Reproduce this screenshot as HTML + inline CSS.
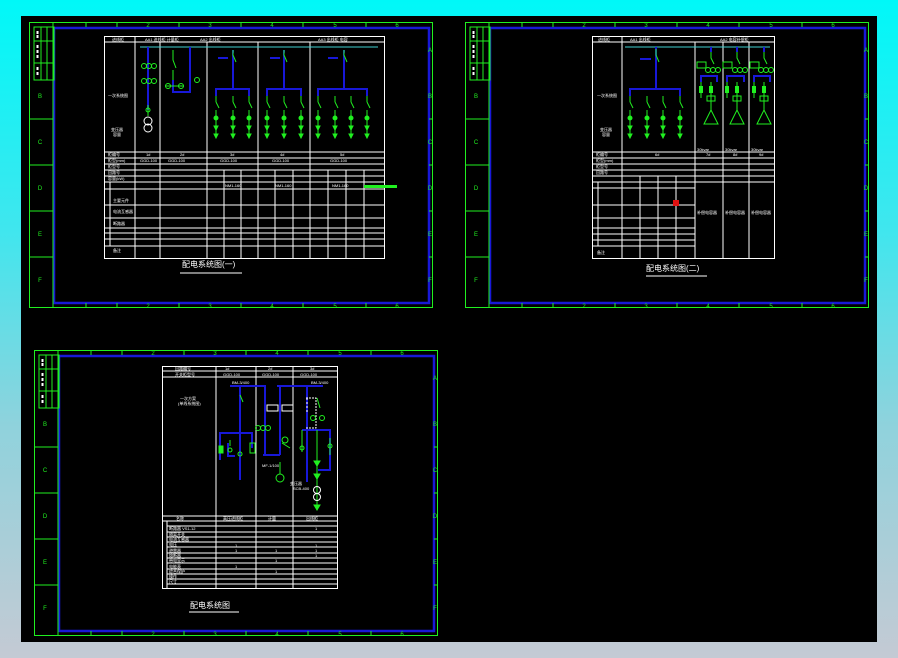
<!DOCTYPE html>
<html><head><meta charset="utf-8"><style>
html,body{margin:0;padding:0}
body{width:898px;height:658px;overflow:hidden;background:linear-gradient(#00f8f8 0%,#40e6ee 35%,#90d2dc 65%,#c4cad4 100%);position:relative;font-family:"Liberation Sans","Noto Sans CJK SC",sans-serif}
#blk{position:absolute;left:21px;top:16px;width:856px;height:626px;background:#000}
svg{position:absolute;left:0;top:0}
</style></head><body>
<div id="blk"></div>
<svg width="898" height="658" viewBox="0 0 898 658" font-family="Liberation Sans, Noto Sans CJK SC, sans-serif">
<defs>
<g id="frame">
<rect x="0.5" y="0.5" width="403" height="285" fill="none" stroke="#20f020" stroke-width="1"/>
<rect x="25" y="6" width="375" height="275" fill="none" stroke="#1818d8" stroke-width="2.5"/>
<line x1="24" y1="0" x2="24" y2="286" stroke="#20f020"/>
<g stroke="#20f020" stroke-width="1">
<line x1="0" y1="97" x2="24" y2="97"/><line x1="0" y1="143" x2="24" y2="143"/><line x1="0" y1="189" x2="24" y2="189"/><line x1="0" y1="235" x2="24" y2="235"/>
<line x1="400" y1="97" x2="404" y2="97"/><line x1="400" y1="143" x2="404" y2="143"/><line x1="400" y1="189" x2="404" y2="189"/><line x1="400" y1="235" x2="404" y2="235"/>
<rect x="5" y="5" width="20" height="53" fill="none"/>
<line x1="12" y1="5" x2="12" y2="58"/><line x1="18" y1="5" x2="18" y2="58"/>
<line x1="5" y1="19" x2="25" y2="19"/><line x1="5" y1="41" x2="25" y2="41"/>
<line x1="57" y1="0" x2="57" y2="5"/><line x1="88" y1="0" x2="88" y2="5"/><line x1="150" y1="0" x2="150" y2="5"/><line x1="212" y1="0" x2="212" y2="5"/><line x1="274" y1="0" x2="274" y2="5"/><line x1="337" y1="0" x2="337" y2="5"/>
<line x1="57" y1="281" x2="57" y2="286"/><line x1="88" y1="281" x2="88" y2="286"/><line x1="150" y1="281" x2="150" y2="286"/><line x1="212" y1="281" x2="212" y2="286"/><line x1="274" y1="281" x2="274" y2="286"/><line x1="337" y1="281" x2="337" y2="286"/>
</g>
<g fill="#fff"><rect x="7.5" y="9" width="2" height="3"/><rect x="7.5" y="13" width="2" height="3"/><rect x="7.5" y="23" width="2" height="3"/><rect x="7.5" y="28" width="2" height="3"/><rect x="7.5" y="33" width="2" height="3"/><rect x="7.5" y="45" width="2" height="3"/><rect x="7.5" y="50" width="2" height="3"/></g>
<g fill="#20f020" font-size="6" text-anchor="middle">
<text x="11" y="76">B</text><text x="11" y="122">C</text><text x="11" y="168">D</text><text x="11" y="214">E</text><text x="11" y="260">F</text>
<text x="401" y="30">A</text><text x="401" y="76">B</text><text x="401" y="122">C</text><text x="401" y="168">D</text><text x="401" y="214">E</text><text x="401" y="260">F</text>
<text x="119" y="5">2</text><text x="181" y="5">3</text><text x="243" y="5">4</text><text x="306" y="5">5</text><text x="368" y="5">6</text>
<text x="119" y="286">2</text><text x="181" y="286">3</text><text x="243" y="286">4</text><text x="306" y="286">5</text><text x="368" y="286">6</text>
</g>
</g>
<g id="br" stroke="#20f020" fill="none" stroke-width="1">
<line x1="0" y1="0" x2="0" y2="6"/><line x1="0" y1="6" x2="3" y2="12"/><line x1="0" y1="14" x2="0" y2="30"/>
<circle cx="0" cy="22" r="2" fill="#20f020"/><path d="M-2 30 L2 30 L0 34 Z" fill="#20f020"/><line x1="0" y1="34" x2="0" y2="40"/><path d="M-2 38 L2 38 L0 42 Z" fill="#20f020"/>
</g>
</defs>

<!-- Sheet 1 -->
<use href="#frame" x="29" y="22"/>
<g stroke="#fff" stroke-width="1" fill="none">
<rect x="104.5" y="36.5" width="280" height="222"/>
<line x1="104" y1="42" x2="384" y2="42"/>
<line x1="104" y1="152" x2="384" y2="152"/><line x1="104" y1="158" x2="384" y2="158"/><line x1="104" y1="164" x2="384" y2="164"/><line x1="104" y1="170" x2="384" y2="170"/><line x1="104" y1="176" x2="384" y2="176"/><line x1="104" y1="182" x2="384" y2="182"/><line x1="104" y1="189" x2="384" y2="189"/><line x1="104" y1="205" x2="384" y2="205"/><line x1="104" y1="218" x2="384" y2="218"/><line x1="104" y1="228" x2="384" y2="228"/><line x1="104" y1="233" x2="384" y2="233"/><line x1="104" y1="239" x2="384" y2="239"/><line x1="104" y1="246" x2="384" y2="246"/>
<line x1="135" y1="36" x2="135" y2="258"/><line x1="160" y1="42" x2="160" y2="258"/><line x1="207" y1="42" x2="207" y2="258"/><line x1="258" y1="42" x2="258" y2="258"/><line x1="310" y1="42" x2="310" y2="258"/>
<line x1="224" y1="170" x2="224" y2="258"/><line x1="241" y1="170" x2="241" y2="258"/><line x1="275" y1="170" x2="275" y2="258"/><line x1="293" y1="170" x2="293" y2="258"/><line x1="328" y1="170" x2="328" y2="258"/><line x1="346" y1="170" x2="346" y2="258"/><line x1="364" y1="170" x2="364" y2="258"/>
<line x1="110" y1="182" x2="110" y2="246"/>
<line x1="180" y1="273" x2="242" y2="273"/>
</g>
<line x1="140" y1="47" x2="378" y2="47" stroke="#40d0d0"/>
<g stroke="#1818d8" stroke-width="2" fill="none">
<line x1="148" y1="47" x2="148" y2="110"/><path d="M190 47 V92 H173 V80"/>
<line x1="233" y1="50" x2="233" y2="88"/><path d="M216 96 V89 H249 V96"/>
<line x1="284" y1="50" x2="284" y2="88"/><path d="M267 96 V89 H301 V96"/>
<line x1="344" y1="50" x2="344" y2="88"/><path d="M318 96 V89 H367 V96"/>
<line x1="218" y1="58" x2="228" y2="58"/><line x1="270" y1="58" x2="280" y2="58"/><line x1="328" y1="58" x2="338" y2="58"/>
</g>
<g stroke="#20f020" fill="none">
<circle cx="144" cy="66" r="2.5"/><circle cx="149" cy="66" r="2.5"/><circle cx="154" cy="66" r="2.5"/>
<circle cx="144" cy="81" r="2.5"/><circle cx="149" cy="81" r="2.5"/><circle cx="154" cy="81" r="2.5"/>
<circle cx="148" cy="121" r="4" stroke="#fff"/><circle cx="148" cy="128" r="4" stroke="#fff"/>
<line x1="148" y1="105" x2="148" y2="116"/><circle cx="148" cy="110" r="2"/>
<path d="M173 50 V60 L176 68 M173 70 V80"/><circle cx="168" cy="86" r="2.5"/><circle cx="181" cy="86" r="2.5"/><circle cx="197" cy="80" r="2.5"/><line x1="165" y1="86" x2="184" y2="86"/>
</g>
<use href="#br" x="216" y="96"/><use href="#br" x="233" y="96"/><use href="#br" x="249" y="96"/>
<use href="#br" x="267" y="96"/><use href="#br" x="284" y="96"/><use href="#br" x="301" y="96"/>
<use href="#br" x="318" y="96"/><use href="#br" x="335" y="96"/><use href="#br" x="351" y="96"/><use href="#br" x="367" y="96"/>
<g stroke="#20f020"><path d="M233 50 V55 L236 62"/><path d="M284 50 V55 L287 62"/><path d="M344 50 V55 L347 62"/></g>
<rect x="364" y="185" width="33" height="3" fill="#20f020"/>
<g fill="#fff" font-size="4">
<text x="112" y="41">进线柜</text><text x="145" y="41">AA1 进线柜 计量柜</text><text x="200" y="41">AA2 出线柜</text><text x="318" y="41">AA3 出线柜 电容</text>
<text x="108" y="97">一次系统图</text><text x="111" y="131">变压器</text><text x="113" y="136">容量</text>
<text x="108" y="156">柜编号</text><text x="108" y="162">柜型(mm)</text><text x="108" y="168">柜型号</text><text x="108" y="174">回路号</text><text x="108" y="180">容量(kW)</text>
<text x="113" y="202">主要元件</text><text x="113" y="213">电流互感器</text><text x="113" y="225">断路器</text><text x="113" y="252">备注</text>
<text x="146" y="156">1#</text><text x="180" y="156">2#</text><text x="230" y="156">3#</text><text x="280" y="156">4#</text><text x="340" y="156">5#</text>
<text x="140" y="162">GGD-100</text><text x="168" y="162">GGD-100</text><text x="220" y="162">GGD-100</text><text x="272" y="162">GGD-100</text><text x="330" y="162">GGD-100</text>
<text x="225" y="187">NM1-160</text><text x="275" y="187">NM1-160</text><text x="332" y="187">NM1-160</text>
<text x="182" y="267" font-size="8">配电系统图(一)</text>
</g>

<!-- Sheet 2 -->
<use href="#frame" x="465" y="22"/>
<g stroke="#fff" stroke-width="1" fill="none">
<rect x="592.5" y="36.5" width="182" height="222"/>
<line x1="592" y1="42" x2="774" y2="42"/>
<line x1="592" y1="152" x2="774" y2="152"/><line x1="592" y1="158" x2="774" y2="158"/><line x1="592" y1="164" x2="774" y2="164"/><line x1="592" y1="170" x2="774" y2="170"/><line x1="592" y1="176" x2="774" y2="176"/><line x1="592" y1="182" x2="774" y2="182"/>
<line x1="592" y1="188" x2="695" y2="188"/><line x1="592" y1="205" x2="695" y2="205"/><line x1="592" y1="218" x2="695" y2="218"/><line x1="592" y1="228" x2="695" y2="228"/><line x1="592" y1="234" x2="695" y2="234"/><line x1="592" y1="240" x2="695" y2="240"/><line x1="592" y1="246" x2="695" y2="246"/>
<line x1="622" y1="36" x2="622" y2="258"/><line x1="695" y1="42" x2="695" y2="258"/><line x1="723" y1="42" x2="723" y2="258"/><line x1="749" y1="42" x2="749" y2="258"/>
<line x1="640" y1="176" x2="640" y2="258"/><line x1="658" y1="176" x2="658" y2="258"/><line x1="676" y1="176" x2="676" y2="258"/>
<line x1="598" y1="182" x2="598" y2="246"/>
<line x1="646" y1="276" x2="707" y2="276"/>
</g>
<line x1="625" y1="47" x2="770" y2="47" stroke="#40d0d0"/>
<g stroke="#1818d8" stroke-width="2" fill="none">
<line x1="656" y1="47" x2="656" y2="88"/><path d="M630 96 V89 H680 V96"/><line x1="640" y1="59" x2="651" y2="59"/>
<line x1="711" y1="47" x2="711" y2="52"/><line x1="737" y1="47" x2="737" y2="52"/><line x1="764" y1="47" x2="764" y2="52"/>
<path d="M701 82 V76 H717 V82"/><path d="M727 82 V76 H744 V82"/><path d="M754 82 V76 H770 V82"/>
</g>
<use href="#br" x="630" y="96"/><use href="#br" x="647" y="96"/><use href="#br" x="663" y="96"/><use href="#br" x="680" y="96"/>
<g stroke="#20f020" fill="none">
<path d="M656 49 V55 L659 62"/>
<rect x="697" y="62" width="9" height="6"/><rect x="723" y="62" width="9" height="6"/><rect x="750" y="62" width="9" height="6"/>
<circle cx="708" cy="70" r="2.5"/><circle cx="713" cy="70" r="2.5"/><circle cx="718" cy="70" r="2.5"/>
<circle cx="735" cy="70" r="2.5"/><circle cx="740" cy="70" r="2.5"/><circle cx="745" cy="70" r="2.5"/>
<circle cx="761" cy="70" r="2.5"/><circle cx="766" cy="70" r="2.5"/><circle cx="771" cy="70" r="2.5"/>
<path d="M711 52 V58 L714 64"/><path d="M737 52 V58 L740 64"/><path d="M764 52 V58 L767 64"/>
<path d="M711 82 V110 M704 124 L711 110 L718 124 Z"/><path d="M737 82 V110 M730 124 L737 110 L744 124 Z"/><path d="M764 82 V110 M757 124 L764 110 L771 124 Z"/>
<rect x="707" y="96" width="8" height="5"/><rect x="733" y="96" width="8" height="5"/><rect x="760" y="96" width="8" height="5"/>
<line x1="701" y1="82" x2="701" y2="98"/><line x1="727" y1="82" x2="727" y2="98"/><line x1="754" y1="82" x2="754" y2="98"/>
</g>
<g fill="#20f020"><rect x="699" y="86" width="4" height="7"/><rect x="725" y="86" width="4" height="7"/><rect x="752" y="86" width="4" height="7"/><rect x="709" y="86" width="4" height="7"/><rect x="735" y="86" width="4" height="7"/><rect x="762" y="86" width="4" height="7"/></g>
<rect x="673" y="200" width="6" height="6" fill="#e01010"/>
<g fill="#fff" font-size="4">
<text x="598" y="41">进线柜</text><text x="630" y="41">AA1 出线柜</text><text x="720" y="41">AA2 电容补偿柜</text>
<text x="597" y="97">一次系统图</text><text x="600" y="131">变压器</text><text x="602" y="136">容量</text>
<text x="596" y="156">柜编号</text><text x="596" y="162">柜型(mm)</text><text x="596" y="168">柜型号</text><text x="596" y="174">回路号</text>
<text x="655" y="156">6#</text><text x="706" y="156">7#</text><text x="733" y="156">8#</text><text x="759" y="156">9#</text>
<text x="697" y="151">30kvar</text><text x="725" y="151">30kvar</text><text x="751" y="151">30kvar</text>
<text x="697" y="214">补偿电容器</text><text x="725" y="214">补偿电容器</text><text x="751" y="214">补偿电容器</text>
<text x="597" y="254">备注</text>
<text x="646" y="271" font-size="8">配电系统图(二)</text>
</g>

<!-- Sheet 3 -->
<use href="#frame" x="34" y="350"/>
<g stroke="#fff" stroke-width="1" fill="none">
<rect x="162.5" y="366.5" width="175" height="222"/>
<line x1="162" y1="371" x2="337" y2="371"/><line x1="162" y1="377" x2="337" y2="377"/>
<line x1="162" y1="516" x2="337" y2="516"/><line x1="162" y1="521" x2="337" y2="521"/>
<line x1="167" y1="526" x2="337" y2="526"/><line x1="167" y1="532" x2="337" y2="532"/><line x1="167" y1="537" x2="337" y2="537"/><line x1="167" y1="542" x2="337" y2="542"/><line x1="167" y1="547" x2="337" y2="547"/><line x1="167" y1="553" x2="337" y2="553"/><line x1="167" y1="558" x2="337" y2="558"/><line x1="167" y1="563" x2="337" y2="563"/><line x1="167" y1="569" x2="337" y2="569"/><line x1="167" y1="574" x2="337" y2="574"/><line x1="167" y1="579" x2="337" y2="579"/><line x1="167" y1="584" x2="337" y2="584"/>
<line x1="216" y1="366" x2="216" y2="588"/><line x1="256" y1="366" x2="256" y2="588"/><line x1="293" y1="366" x2="293" y2="588"/>
<line x1="167" y1="521" x2="167" y2="588"/>
<line x1="189" y1="612" x2="239" y2="612"/>
</g>
<g stroke="#1818d8" stroke-width="2" fill="none">
<path d="M230 386 H265 V455"/><line x1="240" y1="386" x2="240" y2="480"/><path d="M220 460 V433 H252 V448"/><path d="M228 443 V456 H235"/>
<path d="M277 386 H323 M280 386 V455 M263 455 H280"/><line x1="307" y1="386" x2="307" y2="482"/><path d="M302 430 H330 V470 H318"/>
</g>
<g stroke="#20f020" fill="none">
<path d="M240 395 L243 402"/><circle cx="240" cy="454" r="2"/><circle cx="230" cy="450" r="2"/><line x1="230" y1="440" x2="230" y2="446"/>
<rect x="219" y="446" width="4" height="7" fill="#20f020"/><rect x="250" y="443" width="5" height="10"/>
<circle cx="258" cy="428" r="2.5"/><circle cx="263" cy="428" r="2.5"/><circle cx="268" cy="428" r="2.5"/>
<circle cx="285" cy="440" r="3"/><path d="M282 443 L290 448"/>
<rect x="267" y="405" width="11" height="6" stroke="#fff"/><rect x="282" y="405" width="11" height="6" stroke="#fff"/>
<line x1="280" y1="462" x2="280" y2="474"/><circle cx="280" cy="478" r="4"/>
<path d="M307 398 V412" stroke-dasharray="2 2" stroke="#fff"/><path d="M306 398 H316 V428 H306" stroke-dasharray="2 1" stroke="#fff"/>
<path d="M317 398 L320 408"/><circle cx="313" cy="418" r="2.5"/><circle cx="322" cy="418" r="2.5"/>
<line x1="317" y1="430" x2="317" y2="505"/><circle cx="317" cy="490" r="3.5" stroke="#fff"/><circle cx="317" cy="497" r="3.5" stroke="#fff"/>
<path d="M314 461 L320 461 L317 466Z" fill="#20f020"/><path d="M314 474 L320 474 L317 479Z" fill="#20f020"/><path d="M314 505 L320 505 L317 510Z" fill="#20f020"/>
<line x1="302" y1="430" x2="302" y2="452"/><circle cx="302" cy="448" r="2"/><line x1="330" y1="438" x2="330" y2="455"/><circle cx="330" cy="446" r="2"/>
</g>
<g fill="#fff" font-size="4">
<text x="175" y="370">回路编号</text><text x="175" y="376">开关柜型号</text><text x="225" y="370">1#</text><text x="268" y="370">2#</text><text x="310" y="370">3#</text>
<text x="223" y="376">GGD-100</text><text x="262" y="376">GGD-100</text><text x="300" y="376">GGD-100</text>
<text x="180" y="400">一次方案</text><text x="178" y="405">(单线系统图)</text>
<text x="232" y="384">BM-3/400</text><text x="311" y="384">BM-3/400</text><text x="262" y="467">MF-1/100</text>
<text x="290" y="485">变压器</text><text x="293" y="490">SCB-400</text>
<text x="176" y="520">名称</text><text x="223" y="520">高压进线柜</text><text x="268" y="520">计量</text><text x="306" y="520">出线柜</text>
<text x="169" y="530">断路器 VS1-12</text><text x="169" y="536">隔离开关</text><text x="169" y="541">电流互感器</text><text x="169" y="546">电压</text><text x="169" y="552">避雷器</text><text x="169" y="557">熔断器</text><text x="169" y="562">带电显示</text><text x="169" y="568">电能表</text><text x="169" y="573">综合保护</text><text x="169" y="578">操作</text><text x="169" y="583">尺寸</text>
<text x="315" y="530">1</text><text x="235" y="547">1</text><text x="315" y="547">1</text><text x="235" y="552">1</text><text x="275" y="552">1</text><text x="315" y="552">1</text><text x="315" y="557">1</text><text x="275" y="562">1</text><text x="235" y="568">1</text><text x="275" y="573">1</text>
<text x="190" y="608" font-size="8">配电系统图</text>
</g>
</svg>
</body></html>
